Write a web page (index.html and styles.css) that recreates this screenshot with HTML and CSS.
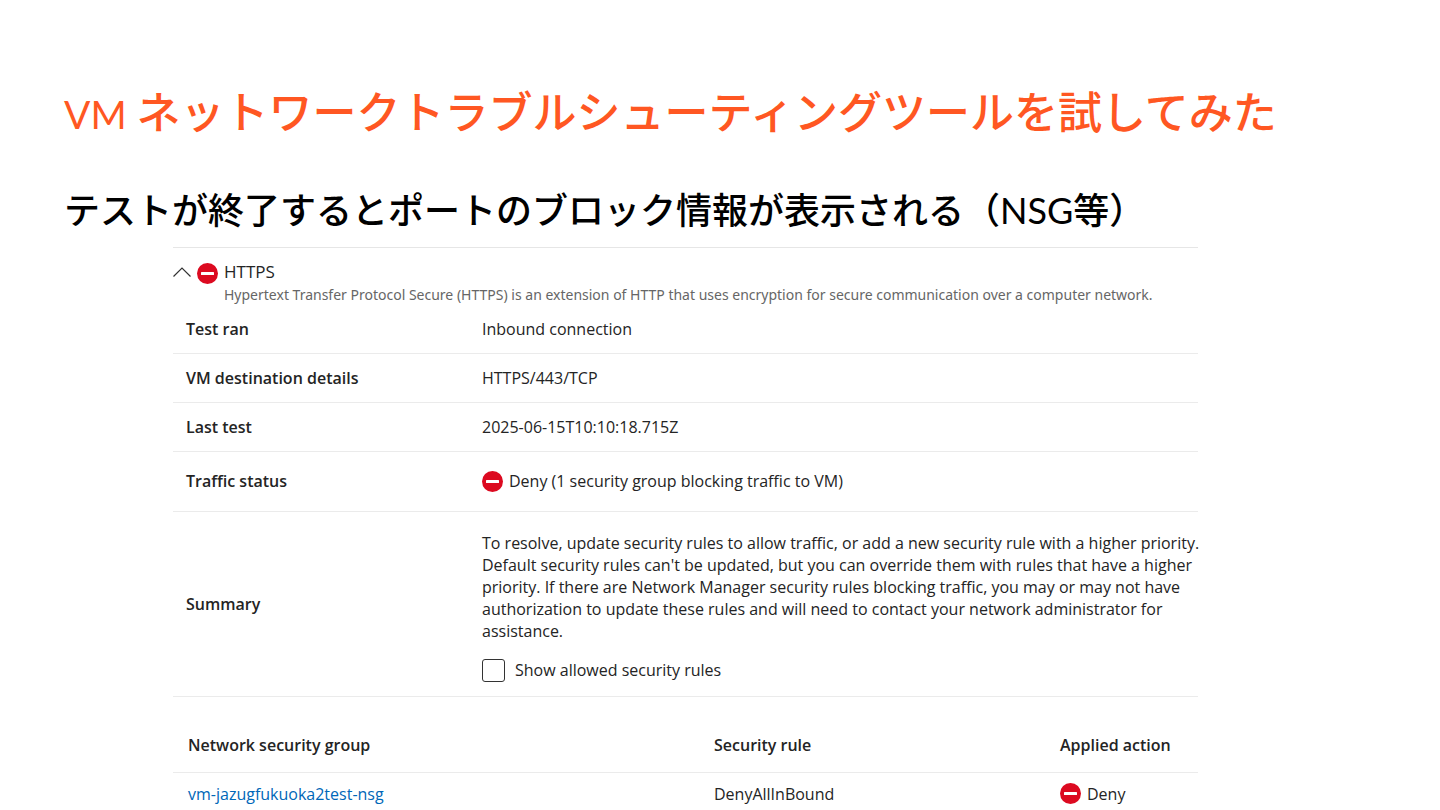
FILE: index.html
```html
<!DOCTYPE html>
<html lang="ja">
<head>
<meta charset="utf-8">
<title>VM ネットワークトラブルシューティングツール</title>
<link rel="stylesheet" href="styles.css">
</head>
<body>
<main class="slide">
  <h1 class="title"><span class="latin">VM </span>ネットワークトラブルシューティングツールを試してみた</h1>
  <h2 class="lead">テストが終了するとポートのブロック情報が表示される（<span class="acronym">NSG</span>等）</h2>
  <section class="panel">
    <header class="result">
      <button class="toggle" type="button" aria-label="Collapse HTTPS" aria-expanded="true"><svg class="chevron" viewBox="0 0 18 12"><path d="M0.500 10.500 9 2l8.500 8.500"/></svg></button>
      <svg class="deny result-icon" viewBox="0 0 21 21"><circle cx="10.500" cy="10.500" r="10.500"/><rect x="4" y="9" width="13" height="3" rx="0.500"/></svg>
      <div>
        <h3 class="protocol">HTTPS</h3>
        <p class="about">Hypertext Transfer Protocol Secure (HTTPS) is an extension of HTTP that uses encryption for secure communication over a computer network.</p>
      </div>
    </header>
    <table class="details">
      <tbody>
        <tr class="first"><th scope="row">Test ran</th><td>Inbound connection</td></tr>
        <tr><th scope="row">VM destination details</th><td>HTTPS/443/TCP</td></tr>
        <tr><th scope="row">Last test</th><td>2025-06-15T10:10:18.715Z</td></tr>
        <tr class="status"><th scope="row">Traffic status</th><td><span class="action"><svg class="deny" viewBox="0 0 21 21"><circle cx="10.500" cy="10.500" r="10.500"/><rect x="4" y="9" width="13" height="3" rx="0.500"/></svg>Deny (1 security group blocking traffic to VM)</span></td></tr>
        <tr class="summary"><th scope="row">Summary</th><td>
          <p class="advice">To resolve, update security rules to allow traffic, or add a new security rule with a higher priority.<br>Default security rules can't be updated, but you can override them with rules that have a higher<br>priority. If there are Network Manager security rules blocking traffic, you may or may not have<br>authorization to update these rules and will need to contact your network administrator for<br>assistance.</p>
          <label class="option"><input class="check" type="checkbox">Show allowed security rules</label>
        </td></tr>
      </tbody>
    </table>
    <table class="rules">
      <thead><tr><th scope="col">Network security group</th><th scope="col">Security rule</th><th scope="col">Applied action</th></tr></thead>
      <tbody><tr><td><a class="link" href="#">vm-jazugfukuoka2test-nsg</a></td><td>DenyAllInBound</td><td><span class="action"><svg class="deny" viewBox="0 0 21 21"><circle cx="10.500" cy="10.500" r="10.500"/><rect x="4" y="9" width="13" height="3" rx="0.500"/></svg>Deny</span></td></tr></tbody>
    </table>
  </section>
</main>
</body>
</html>
```
FILE: styles.css
```css
* { box-sizing: border-box; }
body {
  margin: 0;
  background: #fff;
  color: #242424;
  font: 16px/22px "Open Sans", "Noto Sans", sans-serif;
}
h1, h2, h3, p { margin: 0; font-weight: 400; }
.slide { height: 100vh; overflow: hidden; padding: 80px 64px 0; }
.title {
  color: #ff5722;
  font: 500 44px/64px Lato, "Noto Sans CJK JP", sans-serif;
  white-space: nowrap;
}
.latin { font-size: 39px; font-weight: 400; line-height: 1; }
.lead {
  margin-top: 37px;
  color: #000;
  font: 500 36px/58px Lato, "Noto Sans CJK JP", sans-serif;
  white-space: nowrap;
}
.acronym { font-weight: 400; }
.panel { margin: 8px 178px 0 109px; border-top: 1px solid #e6e6e6; }
.result { display: flex; align-items: flex-start; padding-top: 12px; }
.toggle { width: 24px; height: 24px; padding: 0; border: 0; background: none; }
.chevron { display: block; width: 18px; height: 12px; fill: none; stroke: #333; stroke-width: 1.2; }
.deny { width: 21px; height: 21px; flex: none; }
.deny circle { fill: #dc0a20; }
.deny rect { fill: #fff; }
.result-icon { margin: 3px 6px 0 0; }
.protocol { font-size: 17px; line-height: 24px; }
.about { color: #666; font-family: "Noto Sans", sans-serif; font-size: 14px; line-height: 22px; white-space: nowrap; }
table { width: 100%; border-collapse: collapse; table-layout: fixed; }
th { text-align: left; font-weight: 600; }
td, th { padding: 0; }
.details th { width: 309px; padding-left: 13px; }
.details tr { height: 49px; border-bottom: 1px solid #ebebeb; }
.details .first { height: 47px; }
.details .status { height: 60px; }
.details .summary { height: 185px; }
.summary td { padding-top: 6px; }
.advice { white-space: nowrap; line-height: 22px; }
.action { display: flex; align-items: center; gap: 6px; }
.option { display: flex; align-items: center; gap: 10px; margin-top: 17px; }
.check { appearance: none; width: 23px; height: 23px; margin: 0; border: 1px solid #333; border-radius: 3px; }
.rules { margin-top: 21px; }
.rules tr { height: 42px; }
.rules thead tr { height: 55px; border-bottom: 1px solid #ebebeb; }
.rules th:first-child, .rules td:first-child { padding-left: 15px; }
.rules th:first-child { width: 541px; }
.rules th:nth-child(2) { width: 346px; }
.link { color: #0067b8; text-decoration: none; }
```
